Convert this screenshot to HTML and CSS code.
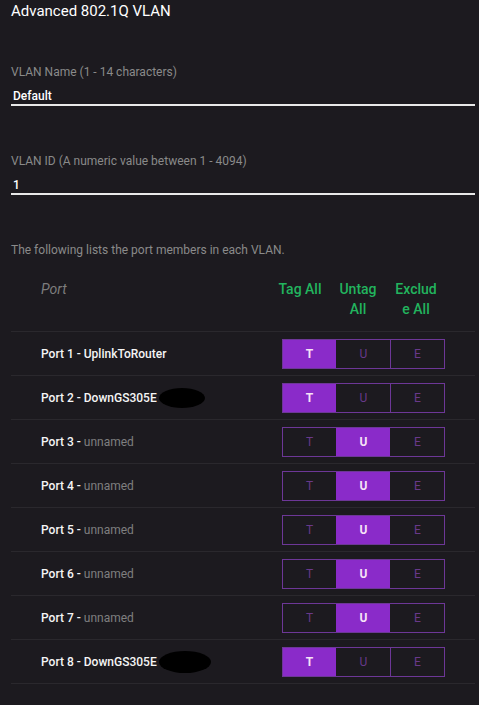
FILE: index.html
```html
<!DOCTYPE html>
<html lang="en">
<head>
    <meta charset="UTF-8">
    <meta name="viewport" content="width=device-width, initial-scale=1.0">
    <title>Advanced 802.1Q VLAN</title>
    <link rel="stylesheet" href="styles.css">
</head>
<body>
    <div class="page">
        <h1 class="title">Advanced 802.1Q VLAN</h1>

        <div class="field field-name">
            <label class="field-label" for="vlanName">VLAN Name (1 - 14 characters)</label>
            <input class="field-input" id="vlanName" type="text" value="Default">
        </div>

        <div class="field field-id">
            <label class="field-label" for="vlanId">VLAN ID (A numeric value between 1 - 4094)</label>
            <input class="field-input" id="vlanId" type="text" value="1">
        </div>

        <p class="intro">The following lists the port members in each VLAN.</p>

        <div class="ports">
            <div class="ports-head">
                <span class="head-port">Port</span>
                <span class="head-all">Tag All</span>
                <span class="head-all">Untag All</span>
                <span class="head-all">Exclude All</span>
            </div>

            <div class="port-row">
                <span class="port-name">Port 1 - UplinkToRouter</span>
                <div class="seg"><span class="on">T</span><span>U</span><span>E</span></div>
            </div>
            <div class="port-row">
                <span class="port-name">Port 2 - DownGS305E<i class="redact"></i></span>
                <div class="seg"><span class="on">T</span><span>U</span><span>E</span></div>
            </div>
            <div class="port-row">
                <span class="port-name">Port 3 - <em>unnamed</em></span>
                <div class="seg"><span>T</span><span class="on">U</span><span>E</span></div>
            </div>
            <div class="port-row">
                <span class="port-name">Port 4 - <em>unnamed</em></span>
                <div class="seg"><span>T</span><span class="on">U</span><span>E</span></div>
            </div>
            <div class="port-row">
                <span class="port-name">Port 5 - <em>unnamed</em></span>
                <div class="seg"><span>T</span><span class="on">U</span><span>E</span></div>
            </div>
            <div class="port-row">
                <span class="port-name">Port 6 - <em>unnamed</em></span>
                <div class="seg"><span>T</span><span class="on">U</span><span>E</span></div>
            </div>
            <div class="port-row">
                <span class="port-name">Port 7 - <em>unnamed</em></span>
                <div class="seg"><span>T</span><span class="on">U</span><span>E</span></div>
            </div>
            <div class="port-row">
                <span class="port-name">Port 8 - DownGS305E<i class="redact redact-wide"></i></span>
                <div class="seg"><span class="on">T</span><span>U</span><span>E</span></div>
            </div>
        </div>
    </div>
</body>
</html>
```

FILE: styles.css
```css
body {
    margin: 0;
    background-color: #1c1a1f;
    color: #f2f2f2;
    font-family: Roboto, "Liberation Sans", sans-serif;
    font-size: 12px;
}

.page {
    padding: 0 4px 0 11px;
}

.title {
    margin: 0;
    padding-top: 1px;
    font-size: 15px;
    font-weight: 400;
    line-height: 21px;
    color: #ffffff;
}

.field {
    display: flex;
    flex-direction: column;
}

.field-name {
    margin-top: 42px;
}

.field-id {
    margin-top: 47px;
}

.field-label {
    line-height: 16px;
    color: #8a8a8a;
}

.field-input {
    margin-top: 8px;
    padding: 0 0 0 2px;
    height: 16px;
    background: transparent;
    border: none;
    border-bottom: 2px solid #e8e8e8;
    color: #ffffff;
    font-family: inherit;
    font-size: 12px;
    font-weight: 500;
    outline: none;
}

.intro {
    margin: 47px 0 0;
    line-height: 16px;
    color: #8a8a8a;
}

.ports-head {
    display: flex;
    align-items: flex-start;
    padding: 21px 30px 12px 30px;
    border-bottom: 1px solid #2a282d;
    font-size: 14px;
    line-height: 20px;
}

.head-port {
    flex: 1;
    font-style: italic;
    color: #7d7d7d;
}

.head-all {
    width: 46px;
    padding: 0 6px;
    text-align: center;
    font-weight: 500;
    color: #22b45e;
    overflow-wrap: anywhere;
}

.port-row {
    display: flex;
    align-items: center;
    padding: 7px 30px 6px 30px;
    border-bottom: 1px solid #2a282d;
}

.port-name {
    flex: 1;
    font-weight: 500;
    color: #f5f5f5;
    display: flex;
    align-items: center;
}

.port-name em {
    font-style: normal;
    font-weight: 400;
    color: #7f7f7f;
    margin-left: 3px;
}

.redact {
    display: inline-block;
    width: 46px;
    height: 20px;
    margin-left: 2px;
    background: #000;
    border-radius: 50%;
}

.redact-wide {
    width: 52px;
    height: 22px;
}

.seg {
    display: flex;
    border: 1px solid #6d3797;
    height: 28px;
}

.seg span {
    width: 53px;
    display: flex;
    align-items: center;
    justify-content: center;
    border-left: 1px solid #6d3797;
    color: #68398a;
}

.seg span:first-child {
    border-left: none;
}

.seg .on {
    background-color: #8a2bc9;
    border-color: #8a2bc9;
    color: #f6e2f7;
    font-weight: 700;
}

.seg .on + span {
    border-left-color: transparent;
}
```
